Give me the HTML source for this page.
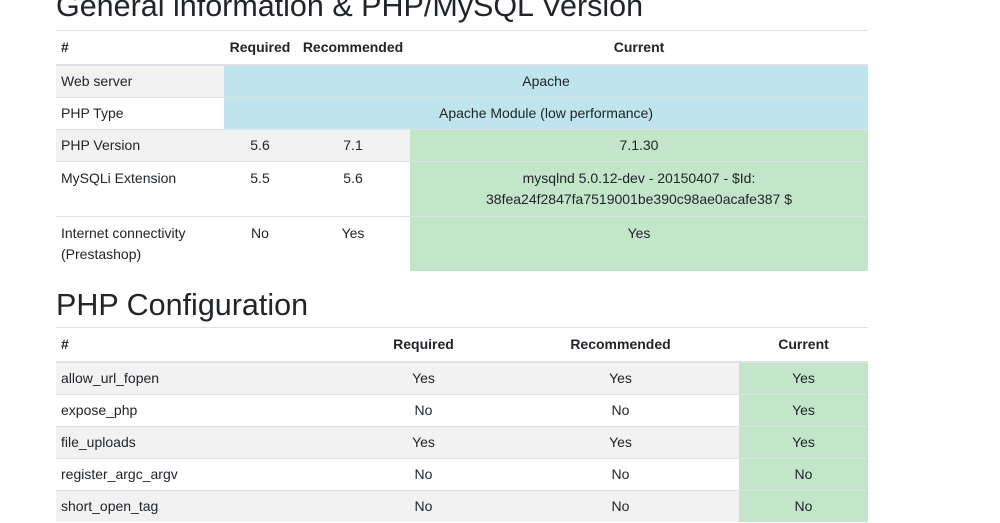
<!DOCTYPE html>
<html><head><style>
body{margin:0;width:1000px;height:523px;overflow:hidden;background:#fff;font-family:"Liberation Sans",sans-serif;color:#212529;font-size:14px;position:relative}
h2{position:absolute;left:56px;margin:0;font-weight:normal;font-size:30.5px;line-height:34px;}
table{position:absolute;left:56px;width:812px;border-collapse:collapse;table-layout:fixed}
td,th{padding:5px 5px;line-height:21px;border-top:1px solid #dee2e6;vertical-align:top}
th{font-weight:bold;text-align:center;padding:6px 5px;border-bottom:2px solid #dee2e6}
th:first-child{text-align:left}
td{text-align:center;height:21px}
td:first-child{text-align:left}
tr.s td{background:#f2f2f2}
tr td.i{background:#bee5eb}
tr td.g{background:#c3e6cb}
tr.t td{padding-top:6px;padding-bottom:6px}
</style></head><body>
<h2 style="top:-11px">General information &amp; PHP/MySQL Version</h2>
<table style="top:30px">
<colgroup><col style="width:168px"><col style="width:72px"><col style="width:114px"><col></colgroup>
<tr><th>#</th><th>Required</th><th>Recommended</th><th>Current</th></tr>
<tr class="s"><td>Web server</td><td colspan="3" class="i">Apache</td></tr>
<tr><td>PHP Type</td><td colspan="3" class="i">Apache Module (low performance)</td></tr>
<tr class="s"><td>PHP Version</td><td>5.6</td><td>7.1</td><td class="g">7.1.30</td></tr>
<tr class="t"><td>MySQLi Extension</td><td>5.5</td><td>5.6</td><td class="g">mysqlnd 5.0.12-dev - 20150407 - $Id:<br>38fea24f2847fa7519001be390c98ae0acafe387 $</td></tr>
<tr class="t"><td>Internet connectivity<br>(Prestashop)</td><td>No</td><td>Yes</td><td class="g">Yes</td></tr>
</table>
<h2 style="top:288px">PHP Configuration</h2>
<table style="top:327px">
<colgroup><col style="width:289px"><col style="width:157px"><col style="width:237px"><col></colgroup>
<tr><th>#</th><th>Required</th><th>Recommended</th><th>Current</th></tr>
<tr class="s"><td>allow_url_fopen</td><td>Yes</td><td>Yes</td><td class="g">Yes</td></tr>
<tr><td>expose_php</td><td>No</td><td>No</td><td class="g">Yes</td></tr>
<tr class="s"><td>file_uploads</td><td>Yes</td><td>Yes</td><td class="g">Yes</td></tr>
<tr><td>register_argc_argv</td><td>No</td><td>No</td><td class="g">No</td></tr>
<tr class="s"><td>short_open_tag</td><td>No</td><td>No</td><td class="g">No</td></tr>
</table>
</body></html>
